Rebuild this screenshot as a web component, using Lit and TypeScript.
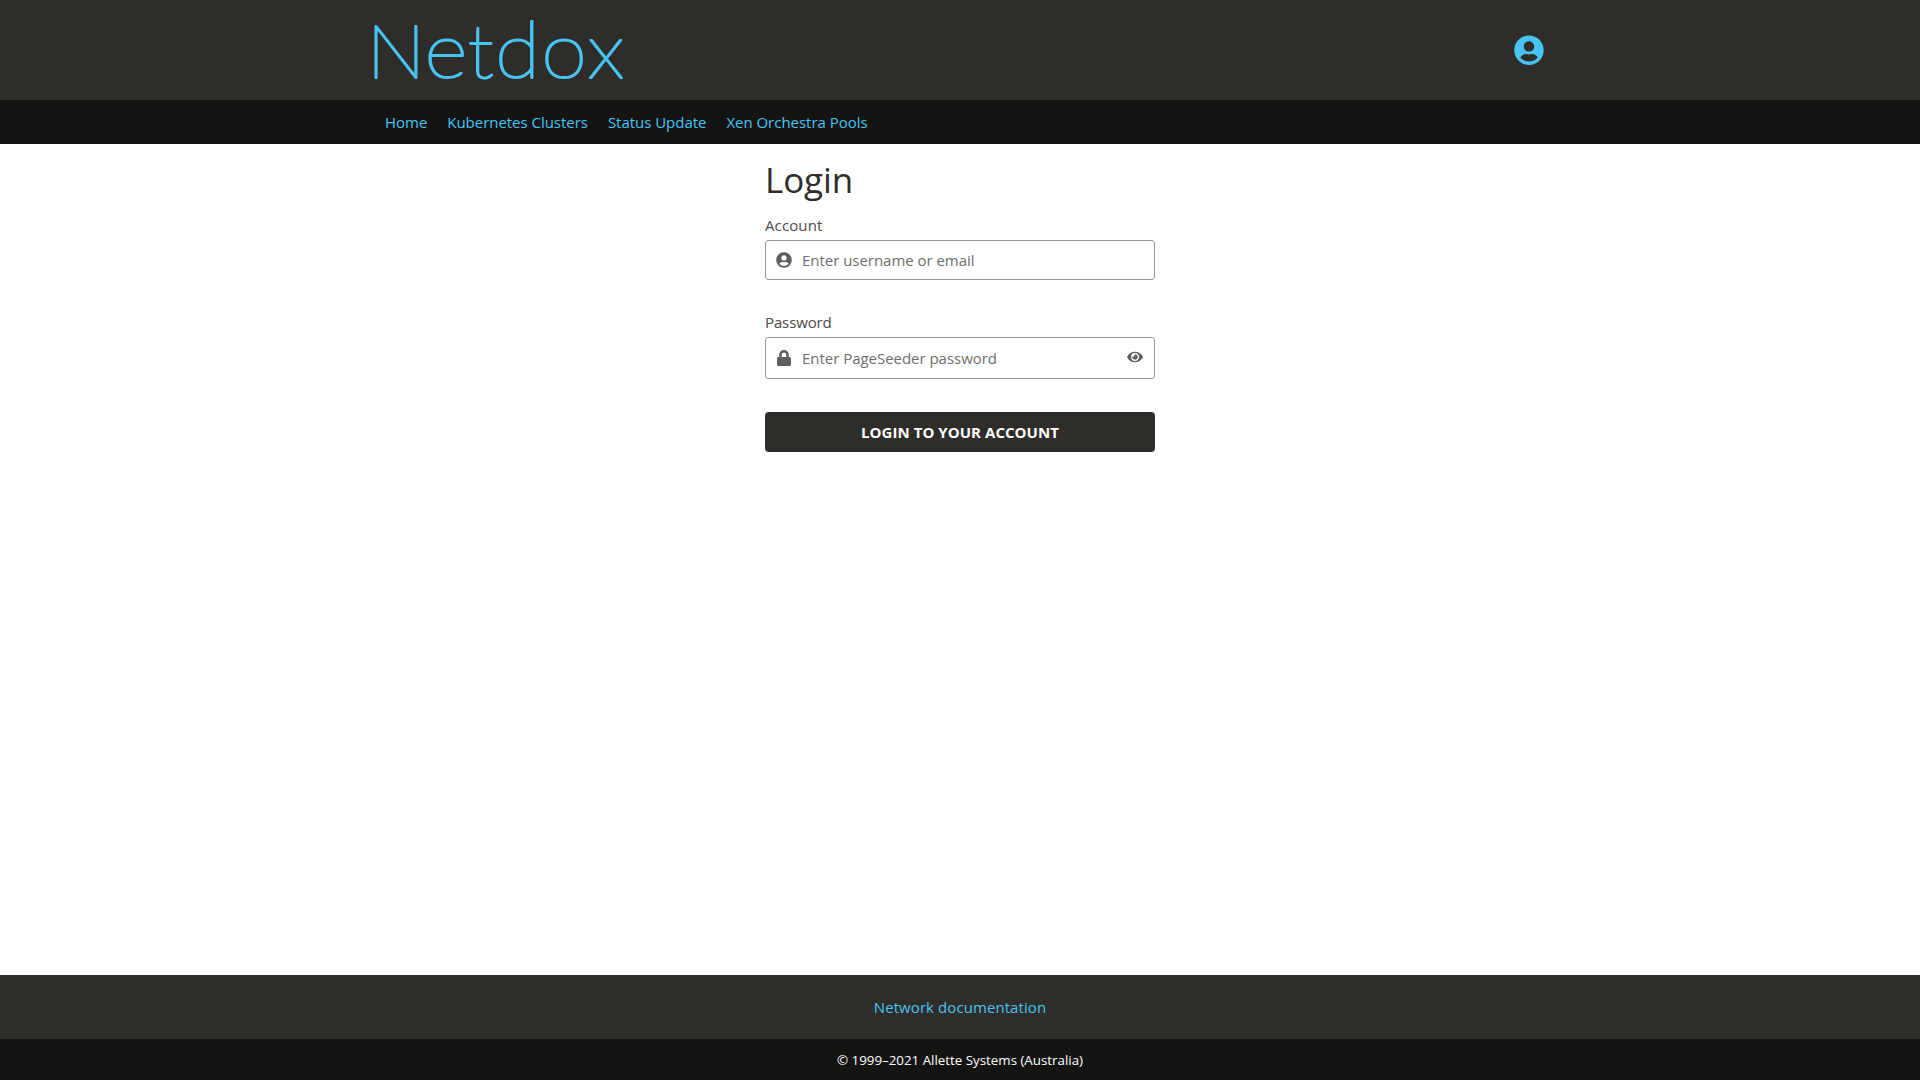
import { LitElement, html, css, svg } from "lit";
import { customElement, property } from "lit/decorators.js";

const ICONS: Record<string, { box: string; d: string }> = {
  user: {
    box: "0 0 496 512",
    d: "M248 8C111 8 0 119 0 256s111 248 248 248 248-111 248-248S385 8 248 8zm0 96c48.6 0 88 39.4 88 88s-39.4 88-88 88-88-39.4-88-88 39.4-88 88-88zm0 344c-58.7 0-111.3-26.6-146.5-68.2 18.8-35.4 55.6-59.8 98.5-59.8 2.4 0 4.8.4 7.1 1.1 13 4.2 26.6 6.9 40.9 6.9 14.3 0 28-2.7 40.9-6.9 2.3-.7 4.7-1.1 7.1-1.1 42.9 0 79.7 24.4 98.5 59.8C359.3 421.4 306.7 448 248 448z",
  },
  lock: {
    box: "0 0 448 512",
    d: "M400 224h-24v-72C376 68.2 307.8 0 224 0S72 68.2 72 152v72H48c-26.5 0-48 21.5-48 48v192c0 26.5 21.5 48 48 48h352c26.5 0 48-21.5 48-48V272c0-26.5-21.5-48-48-48zm-104 0H152v-72c0-39.7 32.3-72 72-72s72 32.3 72 72v72z",
  },
  eye: {
    box: "0 0 576 512",
    d: "M572.52 241.4C518.29 135.59 410.93 64 288 64S57.68 135.64 3.48 241.41a32.35 32.35 0 0 0 0 29.19C57.71 376.41 165.07 448 288 448s230.32-71.64 284.52-177.41a32.35 32.35 0 0 0 0-29.19zM288 400a144 144 0 1 1 144-144 143.93 143.93 0 0 1-144 144zm0-240a95.31 95.31 0 0 0-25.31 3.79 47.85 47.85 0 0 1-66.9 66.9A95.78 95.78 0 1 0 288 160z",
  },
};

@customElement("nd-icon")
export class NdIcon extends LitElement {
  static styles = css`
    :host { display: block; flex: none; }
    svg { display: block; width: 100%; height: 100%; fill: currentColor; }
  `;
  @property() name = "user";
  render() {
    const icon = ICONS[this.name];
    return html`<svg viewBox=${icon.box} aria-hidden="true">${svg`<path d=${icon.d}></path>`}</svg>`;
  }
}

@customElement("app-root")
export class AppRoot extends LitElement {
  static styles = css`
    :host {
      display: flex;
      flex-direction: column;
      height: 100vh;
      background: #fff;
      color: #4a4a4a;
      font-family: "Open Sans", "Noto Sans", sans-serif;
      font-size: 15px;
    }
    * { box-sizing: border-box; }
    a { color: #47c4f4; text-decoration: none; }
    .header { height: 100px; flex: none; background: #2f2d2a; }
    .container { width: 1170px; height: 100%; margin: 0 auto; display: flex; align-items: center; }
    .brand { justify-content: space-between; color: #47c4f4; }
    .logo { display: block; width: 290px; height: 100px; margin-left: -20px; fill: #47c4f4; stroke: #47c4f4; stroke-width: 2.2px; stroke-linejoin: round; stroke-linecap: round; font-family: Lato, sans-serif; font-weight: 100; font-size: 75px; }
    .logo .round { font-size: 79px; }
    .logo .stem { font-size: 78px; }
    .avatar { width: 30px; height: 30.4px; margin-right: 1px; }
    .nav { height: 44px; flex: none; background: #141412; }
    .nav a { padding: 0 10px; line-height: 44px; letter-spacing: -0.03px; }
    .main { flex: 1; display: flex; justify-content: center; }
    .form { width: 390px; padding-top: 14px; display: flex; flex-direction: column; }
    h1 { margin: 0 0 13px; color: #2f2d2a; font-size: 35px; line-height: 43px; font-weight: 400; letter-spacing: -0.1px; }
    label { line-height: 22px; margin-bottom: 4px; }
    .account { letter-spacing: 0.12px; }
    .password { letter-spacing: -0.12px; }
    .field { display: flex; align-items: center; height: 40px; margin-bottom: 31px; padding: 0 11px 0 10px; border: 1px solid #999; border-radius: 3px; color: #5f5f5f; }
    .field.tall { height: 42px; margin-bottom: 33px; }
    .field .user { width: 16px; height: 16px; }
    .field .lock { width: 14px; height: 16px; margin: 0 1px; }
    .field .eye { width: 16px; height: 14px; margin-bottom: 2px; }
    input { flex: 1; min-width: 0; height: 100%; margin: 0 0 0 10px; padding: 0; border: 0; outline: 0; background: none; font: inherit; letter-spacing: -0.03px; }
    input::placeholder { color: #6e6e6e; opacity: 1; }
    button { height: 40px; padding: 0; border: 0; border-radius: 4px; background: #2f2d2a; color: #fff; font: inherit; font-weight: 700; letter-spacing: 0.05px; }
    .footer { height: 64px; flex: none; display: flex; align-items: center; justify-content: center; background: #2f2d2a; letter-spacing: 0.08px; }
    .legal { height: 41px; flex: none; display: flex; align-items: center; justify-content: center; background: #141412; color: #fff; font-size: 13.33px; }
  `;

  private links = ["Home", "Kubernetes Clusters", "Status Update", "Xen Orchestra Pools"];

  render() {
    return html`
      <header class="header">
        <div class="container brand">
          <svg class="logo" viewBox="-20 0 290 100"><text transform="scale(1.05 1)" y="77.9"><tspan x="-8.2">N</tspan><tspan class="round" x="47.2">e</tspan><tspan x="88.3">t</tspan><tspan class="stem" x="114.5">d</tspan><tspan class="round" x="158.3 202.3">ox</tspan></text></svg>
          <nd-icon class="avatar" name="user"></nd-icon>
        </div>
      </header>
      <nav class="nav"><div class="container">${this.links.map((l) => html`<a href="#">${l}</a>`)}</div></nav>
      <main class="main">
        <form class="form">
          <h1>Login</h1>
          <label class="account" for="account">Account</label>
          <div class="field">
            <nd-icon class="user" name="user"></nd-icon>
            <input id="account" placeholder="Enter username or email" />
          </div>
          <label class="password" for="password">Password</label>
          <div class="field tall">
            <nd-icon class="lock" name="lock"></nd-icon>
            <input id="password" type="password" placeholder="Enter PageSeeder password" />
            <nd-icon class="eye" name="eye"></nd-icon>
          </div>
          <button type="button">LOGIN TO YOUR ACCOUNT</button>
        </form>
      </main>
      <footer class="footer"><a href="#">Network documentation</a></footer>
      <div class="legal">© 1999–2021 Allette Systems (Australia)</div>
    `;
  }
}
